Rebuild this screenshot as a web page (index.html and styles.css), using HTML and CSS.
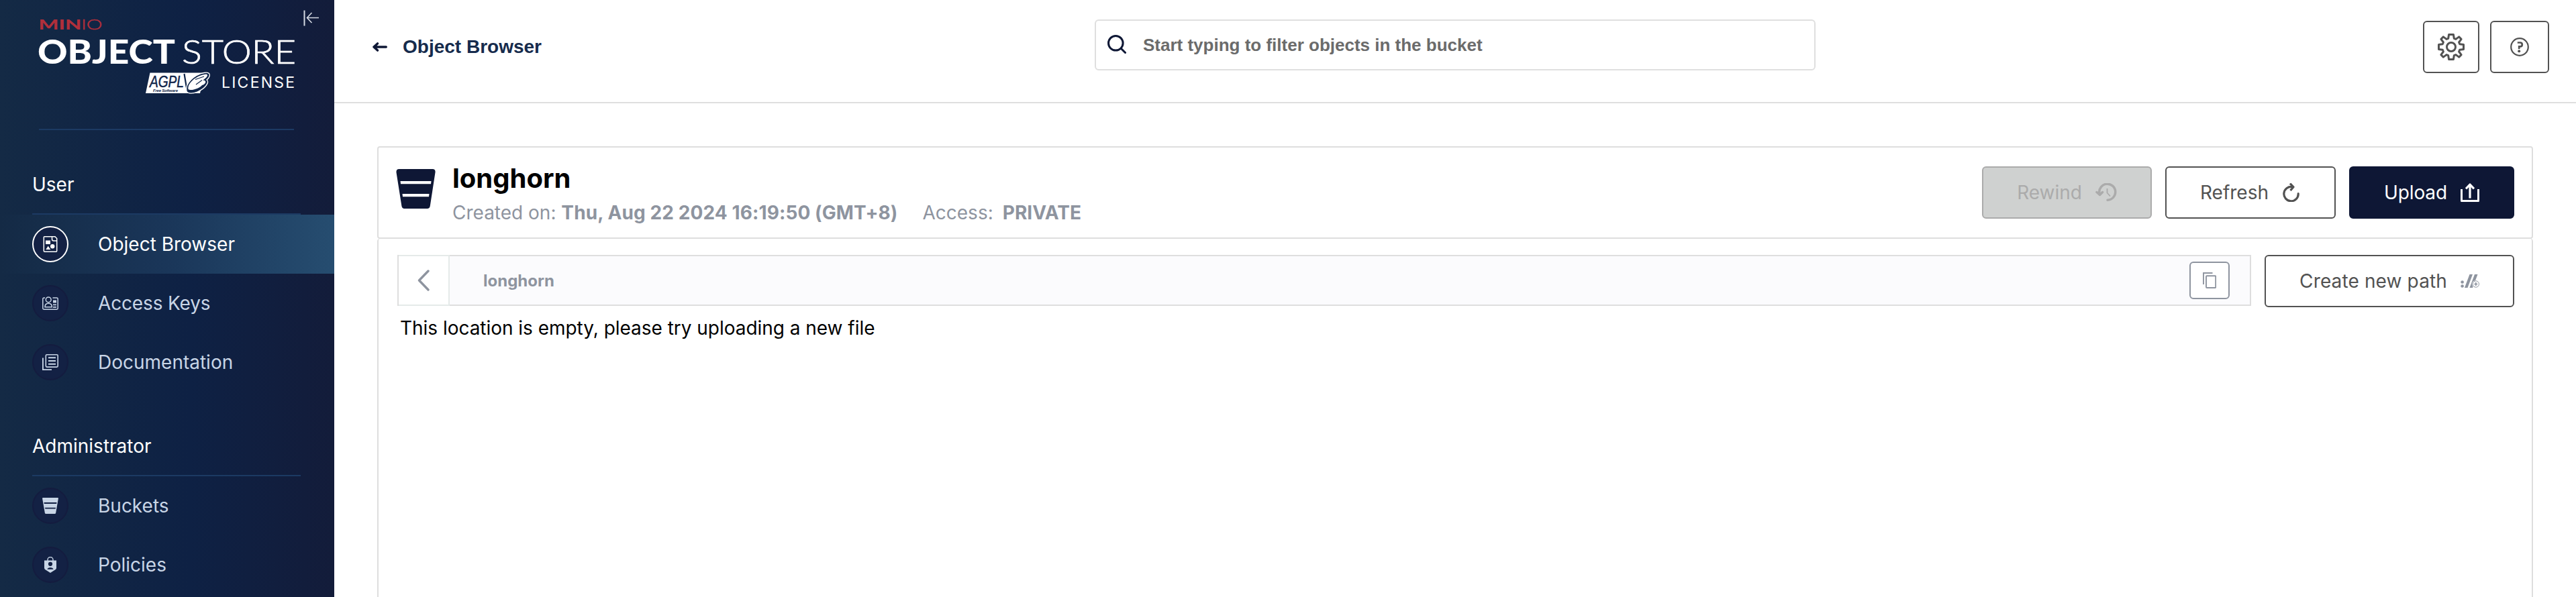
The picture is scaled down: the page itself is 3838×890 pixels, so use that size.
FILE: index.html
```html
<!DOCTYPE html>
<html lang="en">
<head>
<meta charset="utf-8">
<title>Object Browser</title>
<link rel="stylesheet" href="styles.css">
</head>
<body>
<div class="app">
  <aside class="sidebar">
    <svg class="collapse" viewBox="0 0 24 24" fill="none" stroke="#d5dae3" stroke-width="1.6"><path d="M1.5 .5V23.5" stroke-width="2"/><path d="M23 11.5H5.500M12.500 4L5.500 11.500L12.500 19"/></svg>
    <svg class="logo" viewBox="0 0 380 114">
      <g fill="#b02f3b" font-family="Lato, sans-serif" font-size="21.500">
        <text x="-.5" y="15.500" font-weight="900" textLength="64" lengthAdjust="spacingAndGlyphs">MIN</text>
        <text x="63" y="15.500" font-weight="300" stroke="#b02f3b" stroke-width=".5" textLength="31.500" lengthAdjust="spacingAndGlyphs">IO</text>
      </g>
      <g fill="#fff" font-family="Lato, sans-serif" font-size="50">
        <text x="-2" y="67" font-weight="900" textLength="205" lengthAdjust="spacingAndGlyphs">OBJECT</text>
        <text x="213" y="67" font-weight="300" stroke="#fff" stroke-width=".7" textLength="170" lengthAdjust="spacingAndGlyphs">STORE</text>
      </g>
      <path d="M165.500 80.500H247L240 111H159Z" fill="#fff"/>
      <text x="165" y="101.500" fill="#10254a" stroke="#10254a" stroke-width=".5" font-family="Liberation Sans, sans-serif" font-style="italic" font-size="23" textLength="51" lengthAdjust="spacingAndGlyphs">AGPL</text>
      <text x="170" y="108.500" fill="#10254a" font-family="Liberation Sans, sans-serif" font-style="italic" font-weight="700" font-size="6" textLength="37">Free Software</text>
      <path d="M216.500 82L220 103L234 86" fill="none" stroke="#10254a" stroke-width="2.200"/>
      <path d="M220 108C217 96 232 83 246 80.500C259 78.500 254 88 250 91C255 94 248 104 236 109C229 112 222 112 220 108Z" fill="#10254a" stroke="#fff" stroke-width="1.300"/>
      <path d="M222.500 105C221 95 236 84 249 82.500C254 83 249 89 244 91.500C250 91 250 97 243 99C239 104 226 108 222.500 105Z" fill="#fff"/>
      <path d="M233 90.500L246 86M234 98L243 91.500" stroke="#10254a" stroke-width="1.200"/>
      <text x="272" y="102.500" fill="#fff" font-family="Inter, sans-serif" font-weight="400" font-size="23" textLength="109">LICENSE</text>
    </svg>
    <hr class="rule logo-rule">
    <h2 class="group"><span>User</span></h2>
    <a class="item active"><span class="disc"><svg viewBox="0 0 24 24" fill="none" stroke="currentColor" stroke-width="1.500"><path d="M2.300 1.800Q2.300 .8 3.300 .8H19L21.700 3.500V22Q21.700 23.200 20.500 23.200H3.500Q2.300 23.200 2.300 22ZM14.500 1V4.500Q14.500 7 17 7H21.500"/><path stroke="none" fill="currentColor" d="M5 6.500h7v5.500H5ZM5.300 20L8.700 14.800L12.300 20Z"/><circle cx="15.200" cy="15.200" r="3.200" fill="currentColor" stroke="none"/></svg></span><span>Object Browser</span></a>
    <a class="item keys"><span class="disc"><svg viewBox="0 0 24 24" fill="none" stroke="currentColor" stroke-width="1.500"><path d="M4 4H2.500Q.8 4 .8 5.700V19.800Q.8 21.200 2.500 21.200H21.500Q23.200 21.200 23.200 19.800V5.500Q23.200 4 21.500 4H15.500"/><circle cx="9.200" cy="6.800" r="3.900"/><path d="M4 17.800C4 13.500 6 12.300 9.200 12.300S14.400 13.500 14.400 17.800Z"/><path stroke="none" fill="currentColor" d="M16 7.500h5v4h-5ZM16 13.500h5v1.800h-5ZM16 17h5v1.800h-5Z"/></svg></span><span>Access Keys</span></a>
    <a class="item"><span class="disc"><svg viewBox="0 0 24 24" fill="none" stroke="currentColor" stroke-width="1.600"><rect x="5.300" y=".8" width="17.900" height="18.300" rx="1.500"/><path d="M.9 5.500V23.100H14" stroke-width="1.900"/><path d="M9 5.200H20M9 10H20M9 14.800H20" stroke-width="2"/></svg></span><span>Documentation</span></a>
    <h2 class="group"><span>Administrator</span></h2>
    <a class="item"><span class="disc"><svg viewBox="0 0 24 24" fill="currentColor"><path fill-rule="evenodd" d="M1 0H23Q24.100 0 23.900 1.200L20.100 23Q19.900 24 18.500 24H5.500Q4.100 24 3.900 23L.1 1.200Q0 0 1 0ZM2.500 7L2.800 9H21.200L21.500 7ZM4 14.800L4.300 16.500H19.700L20 14.800Z"/></svg></span><span>Buckets</span></a>
    <a class="item"><span class="disc"><svg viewBox="0 0 24 24" fill="none"><path d="M8 6V4.500a4 4 0 0 1 8 0V6" stroke="currentColor" stroke-width="1.400"/><path d="M3 5.500H21V16.500Q21 18 19.800 19L12 24L4.200 19Q3 18 3 16.500Z" fill="currentColor"/><circle cx="12" cy="10.800" r="3.100" fill="#132144"/><path d="M7.500 18.800C8 15 16 15 16.500 18.800Z" fill="#132144"/></svg></span><span>Policies</span></a>
  </aside>
  <main class="main">
    <header class="topbar">
      <div class="crumb">
        <svg class="back" viewBox="0 0 22 14" fill="none" stroke="#0e1735" stroke-width="3.400" stroke-linecap="round" stroke-linejoin="round"><path d="M20.300 7H2M7.500 1.900L2 7L7.500 12.100"/></svg>
        <span>Object Browser</span>
      </div>
      <div class="search">
        <svg viewBox="0 0 28 28" fill="none" stroke="#0e1735" stroke-linecap="round"><circle cx="12.300" cy="12.300" r="10.800" stroke-width="3"/><path d="M20.500 20.500L26.500 26.500" stroke-width="3"/></svg>
        <span>Start typing to filter objects in the bucket</span>
      </div>
      <div class="tools">
        <button class="btn gear"><svg viewBox="0 0 40 40" fill="none" stroke="currentColor" stroke-width="3" stroke-linejoin="round"><path d="M16.600 1.500H23.400L24.300 7.300L27 8.400L31.700 4.900L35.100 8.300L31.600 13L32.700 15.700L38.500 16.600V23.400L32.700 24.300L31.600 27L35.100 31.700L31.700 35.100L27 31.600L24.300 32.700L23.400 38.500H16.600L15.700 32.700L13 31.600L8.300 35.100L4.900 31.700L8.400 27L7.300 24.300L1.500 23.400V16.600L7.300 15.700L8.400 13L4.900 8.300L8.300 4.900L13 8.400L15.700 7.300Z"/><circle cx="20" cy="20" r="6.500"/></svg></button>
        <button class="btn help"><svg viewBox="0 0 28 28" fill="none" stroke="currentColor"><circle cx="14" cy="14" r="12.800" stroke-width="2.200"/><path d="M10.800 7.500H14.800Q17.800 7.500 17.800 10.400T14.800 13.300H13.200V17" stroke-width="2.700"/><circle cx="13.200" cy="20.300" r="2" fill="currentColor" stroke="none"/></svg></button>
      </div>
    </header>
    <section class="card">
      <div class="card-head">
        <svg class="bucket" viewBox="0 0 58 59" fill="#0e1735"><path fill-rule="evenodd" d="M4 0H54Q58.500 0 58 5L50.300 55Q49.700 59 46 59H12Q8.500 59 7.900 55L0 5Q-.3 0 4 0ZM6 18L6.500 22.200H51.500L52 18ZM9 37L9.500 41.300H48.500L49 37Z"/></svg>
        <div class="meta">
          <h1>longhorn</h1>
          <p><span>Created on: </span><b class="date">Thu, Aug 22 2024 16:19:50 (GMT+8)</b><span class="access">Access:</span><b class="level">PRIVATE</b></p>
        </div>
        <div class="actions">
          <button class="btn disabled"><span>Rewind</span><svg class="i32" viewBox="0 0 32 28" fill="none" stroke="currentColor"><path d="M5.800 14.500A12 12 0 1 1 18 25.200" stroke-width="3.500" stroke-linecap="round"/><path d="M2 13.500L6.500 17.500L10.500 13.500" stroke-width="3.500" stroke-linejoin="round" stroke-linecap="round"/><path d="M17.500 8V14.500L22 19.500" stroke-width="1.800"/></svg></button>
          <button class="btn"><span>Refresh</span><svg class="i28" viewBox="0 0 28 28" fill="none" stroke="currentColor" stroke-width="3.200"><path d="M24.200 15.500A10.700 10.700 0 1 1 15.500 5.600" stroke-linecap="round"/><path d="M12 .5L17 5.800L12.500 11" stroke-linejoin="round"/></svg></button>
          <button class="btn primary"><span>Upload</span><svg class="i28" viewBox="0 0 28 28" fill="none" stroke="currentColor" stroke-width="3" stroke-linejoin="round"><path d="M1.500 9V26.500H26.500V9"/><path d="M14 22.500V3M8 8.300L14 2L20 8.300" stroke-width="3.200"/></svg></button>
        </div>
      </div>
      <div class="card-body">
        <div class="pathrow">
          <div class="pathbar">
            <div class="up"><svg viewBox="0 0 18 32" fill="none" stroke="#8e949f" stroke-width="3.400" stroke-linecap="round" stroke-linejoin="round"><path d="M16 2L2.500 16L16 30"/></svg></div>
            <span class="crumbname">longhorn</span>
            <div class="copy"><svg viewBox="0 0 20 24" fill="none" stroke="#8e949f" stroke-width="1.900"><path d="M1 18V1H14.500"/><rect x="5" y="5.200" width="14.200" height="17.800" rx="1"/></svg></div>
          </div>
          <button class="btn create"><span>Create new path</span><svg class="i28" viewBox="0 0 28 28" fill="#8e949f"><circle cx="2.600" cy="15.500" r="2.300"/><circle cx="2.600" cy="21.500" r="2.300"/><path d="M13.500 4H18L10.500 24H6ZM21 4H25.500L18 24H13.500Z"/><circle cx="22.800" cy="18.500" r="5.600" fill="#fff"/><circle cx="22.800" cy="18.500" r="4.700" fill="none" stroke="#8e949f" stroke-width="1"/><path d="M22.800 16V21M20.300 18.500H25.300" stroke="#8e949f" stroke-width="1.600"/></svg></button>
        </div>
        <p class="empty">This location is empty, please try uploading a new file</p>
      </div>
    </section>
  </main>
</div>
</body>
</html>
```
FILE: styles.css
```css
* { box-sizing: border-box; }
body { margin: 0; background: #fff; font-family: Inter, "Liberation Sans", sans-serif; font-size: 28px; color: #000; }
h1, h2, p { margin: 0; font-weight: 400; }
svg { display: block; flex: none; }
button { font: inherit; margin: 0; }

.app { display: flex; width: 3838px; height: 890px; overflow: hidden; }

.sidebar { position: relative; width: 498px; flex: none; background: linear-gradient(90deg, #142a45 0%, #0e2144 57%, #131c3a 100%); }
.collapse { position: absolute; left: 452px; top: 15px; width: 24px; height: 24px; }
.logo { width: 380px; height: 114px; margin: 28px 0 0 58px; overflow: visible; }
.rule { border: 0; height: 2px; margin: 0; background: #1c3a63; }
.logo-rule { margin: 50px 60px 0 58px; }
.group { width: 400px; height: 126px; margin-left: 48px; padding-top: 61px; line-height: 40px; font-size: 28px; color: #fff; border-bottom: 2px solid #1c3a63; }
.item { display: flex; align-items: center; gap: 44px; height: 88px; padding-left: 48px; color: #c8d5e6; }
.item.active { color: #fff; background: linear-gradient(90deg, #142a45 0%, #1a3659 50%, #264d70 100%); }
.item.keys { letter-spacing: -.15px; }
.disc { display: flex; align-items: center; justify-content: center; width: 54px; height: 54px; border: 2px solid #141c3f; border-radius: 50%; background: #132144; }
.active .disc { border-color: #fff; }
.disc svg { width: 24px; height: 24px; }

.main { flex: 1; display: flex; flex-direction: column; }
.topbar { display: flex; align-items: flex-start; height: 154px; border-bottom: 2px solid #dfdfdf; font-family: "Liberation Sans", Arial, sans-serif; font-weight: 700; }
.crumb { display: flex; align-items: center; gap: 23px; width: 1133px; height: 140px; padding-left: 57px; color: #162b4c; }
.back { width: 22px; height: 14px; }
.search { display: flex; align-items: center; gap: 25px; width: 1074px; height: 76px; margin-top: 29px; padding-left: 17px; border: 2px solid #dfdfdf; border-radius: 6px; color: #6b6b6b; font-size: 26px; }
.search svg { width: 28px; height: 28px; margin-top: -2px; }
.tools { display: flex; gap: 16px; margin: 31px 40px 0 auto; }

.btn { display: flex; align-items: center; gap: 20px; height: 78px; padding: 0 50px; border: 2px solid #525252; border-radius: 6px; background: #fff; color: #525252; }
.btn.disabled { background: #cfd1d0; border-color: #ababab; color: #ababab; }
.btn.primary { background: #0e1735; border-color: #0e1735; color: #fff; letter-spacing: -.12px; }
.btn.create { letter-spacing: .13px; }
.btn.gear, .btn.help { justify-content: center; padding: 0; width: 84px; }
.btn.help { width: 88px; }
.gear svg { width: 40px; height: 40px; }
.help svg, .i28 { width: 28px; height: 28px; }
.i32 { width: 32px; height: 28px; }

.card { flex: 1; display: flex; flex-direction: column; margin: 64px 64px 0 64px; }
.card-head { display: flex; align-items: flex-start; height: 138px; padding: 26px 26px 0; border: 2px solid #dedede; border-radius: 4px; }
.actions { margin-top: 2px; }
.bucket { width: 59px; height: 59px; margin-top: 6px; }
.meta { margin-left: 25px; margin-top: -4px; }
.meta h1 { font-size: 40px; line-height: 48px; font-weight: 700; }
.meta p { line-height: 36px; margin-top: 9px; color: #8e949f; white-space: pre; }
.date { letter-spacing: .1px; }
.access { margin-left: 37px; }
.level { margin-left: 14px; }
.actions { display: flex; gap: 20px; margin: 2px 0 0 auto; }
.actions .btn { margin-top: 0; }
.card-body { flex: 1; border: 2px solid #dedede; border-width: 0 2px; border-radius: 4px 4px 0 0; padding: 24px 26px 0 28px; }
.pathrow { display: flex; align-items: flex-start; gap: 20px; }
.pathbar { flex: 1; display: flex; align-items: center; height: 76px; border: 2px solid #dedede; background: #fbfbfd; }
.up { display: flex; align-items: center; justify-content: center; width: 76px; height: 76px; margin: -2px 0; padding-right: 1px; border: 2px solid #e5eae9; border-left: 0; background: #fff; }
.up svg { width: 18px; height: 32px; }
.crumbname { margin-left: 50px; font-size: 24px; font-weight: 700; color: #8e949f; }
.copy { display: flex; align-items: center; justify-content: center; width: 60px; height: 56px; margin: 0 30px 0 auto; border: 2px solid #8e949f; border-radius: 6px; background: #fff; }
.copy svg { width: 20px; height: 24px; }
.empty { line-height: 40px; padding: 11px 0 0 4px; letter-spacing: -.03px; }
```
